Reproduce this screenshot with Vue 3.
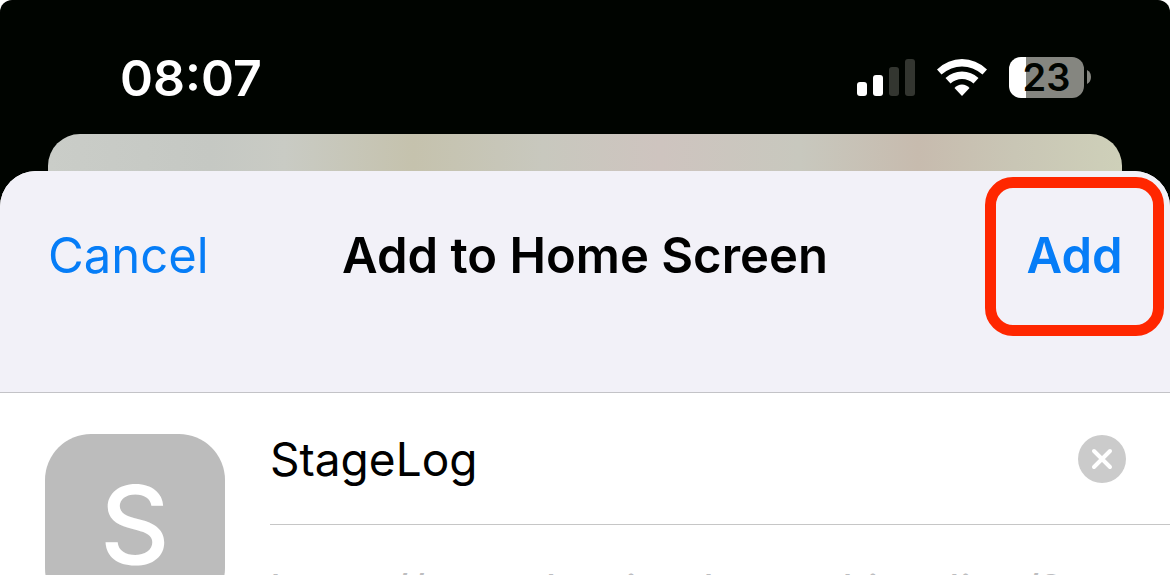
<script setup>
import { ref } from 'vue'

const name = ref('StageLog')
const bars = [14, 21, 29, 37]
</script>

<template>
  <main class="screen">
    <header class="status">
      <time class="clock">08:07</time>
      <div class="indicators">
        <svg class="signal" viewBox="0 0 58 37" role="img" aria-label="Signal strength">
          <rect v-for="(h, i) in bars" :key="h" :x="i * 16" :y="37 - h" width="10" :height="h" rx="3" :fill="i < 2 ? '#fff' : '#333630'" />
        </svg>
        <svg class="wifi" viewBox="0 0 50 37" role="img" aria-label="Wi-Fi">
          <path d="M0 10.500Q11 0 25 0T50 10.500L45.500 15.500Q36 7.500 25 7.500T4.500 15.500Z" fill="#fff" />
          <path d="M8.500 19Q15.500 12.500 25 12.500T41.500 19L36.500 24.500Q31.500 20 25 20T13.500 24.500Z" fill="#fff" />
          <path d="M17.500 29Q20.500 25.500 25 25.500T32.500 29L25 37Z" fill="#fff" />
        </svg>
        <div class="battery">
          <span class="cell">23</span>
          <svg class="cap" viewBox="0 0 4 14" aria-hidden="true"><path d="M0 0Q4 2 4 7T0 14Z" fill="#858680" /></svg>
        </div>
      </div>
    </header>

    <div class="behind"></div>

    <section class="sheet">
      <nav class="bar">
        <button class="action cancel" type="button">Cancel</button>
        <h1 class="title">Add to Home Screen</h1>
        <button class="action add" type="button">Add</button>
      </nav>
      <form class="details" @submit.prevent>
        <div class="icon">S</div>
        <div class="fields">
          <div class="row">
            <input v-model="name" class="name" type="text" aria-label="Name" />
            <button class="clear" type="button" aria-label="Clear name" @click="name = ''">
              <svg viewBox="0 0 48 48" aria-hidden="true">
                <circle cx="24" cy="24" r="24" fill="#cbcbcb" />
                <path d="M16 16L32 32M32 16L16 32" stroke="#fff" stroke-width="4" stroke-linecap="round" />
              </svg>
            </button>
          </div>
          <p class="url">https://stagelog.jamboree.kiranlive/?</p>
        </div>
      </form>
    </section>
  </main>
</template>

<style>
html {
  background: #fff;
}
body {
  margin: 0;
}
</style>

<style scoped>
.screen {
  display: flex;
  flex-direction: column;
  height: 100vh;
  overflow: hidden;
  border-radius: 12px 12px 0 0;
  background: #000400;
  font-family: Inter, "Liberation Sans", sans-serif;
}
.status {
  display: flex;
  flex: none;
  align-items: center;
  justify-content: space-between;
  height: 114px;
  padding: 20px 79px 0 120px;
}
.clock {
  padding-top: 2px;
  color: #fff;
  font-size: 50px;
  line-height: 60px;
  font-weight: 600;
}
.indicators {
  display: flex;
  align-items: center;
  gap: 22px;
}
.signal {
  width: 58px;
  height: 37px;
}
.wifi {
  width: 50px;
  height: 37px;
}
.battery {
  display: flex;
  align-items: center;
  gap: 3px;
}
.cell {
  width: 75px;
  height: 41px;
  border-radius: 12px;
  background: linear-gradient(90deg, #fff 17px, #858680 17px);
  color: #000400;
  font-size: 38px;
  line-height: 41px;
  font-weight: 600;
  text-align: center;
}
.cap {
  width: 4px;
  height: 14px;
}
.behind {
  flex: none;
  height: 37px;
  margin: 0 48px;
  border-radius: 32px 32px 0 0;
  background: linear-gradient(90deg, #cacdc8, #c5c8c3 15%, #c9cbc4 22%, #c5c2ad 34%, #c8c8be 46%, #cec4bf 57%, #c8c8be 70%, #c7bbae 81%, #c9c6b5 90%, #ced0b9);
}
.sheet {
  flex: 1;
  min-height: 0;
  border-radius: 36px 36px 0 0;
  overflow: hidden;
  background: #fff;
}
.bar {
  display: grid;
  grid-template-columns: 1fr auto 1fr;
  align-items: start;
  height: 215px;
  padding: 6px 48px 0;
  border-bottom: 1px solid #c3c3c7;
  background: #f2f1f8;
}
.action {
  border: 0;
  padding: 0;
  background: none;
  color: #067df7;
  font: inherit;
  font-size: 49px;
  line-height: 60px;
}
.cancel {
  justify-self: start;
  margin-top: 49px;
}
.title {
  margin: 49px 0 0;
  color: #000;
  font-size: 49px;
  line-height: 60px;
  font-weight: 600;
}
.add {
  justify-self: end;
  width: 179px;
  height: 159px;
  margin-right: -42px;
  padding-bottom: 2px;
  border: 11px solid #ff2700;
  border-radius: 28px;
  font-weight: 600;
}
.details {
  display: flex;
  gap: 45px;
  padding-left: 45px;
}
.icon {
  flex: none;
  width: 180px;
  height: 180px;
  margin-top: 41px;
  border-radius: 46px;
  background: #bcbcbc;
  color: #fff;
  font-size: 108px;
  line-height: 182px;
  font-weight: 500;
  text-align: center;
}
.fields {
  flex: 1;
  min-width: 0;
}
.row {
  display: flex;
  align-items: center;
  height: 131px;
  padding-right: 44px;
  border-bottom: 1px solid #c6c6c6;
}
.name {
  flex: 1;
  min-width: 0;
  height: 60px;
  padding: 0;
  border: 0;
  outline: 0;
  background: none;
  color: #000;
  font: inherit;
  font-size: 46px;
}
.clear {
  flex: none;
  width: 48px;
  height: 48px;
  padding: 0;
  border: 0;
  background: none;
}
.clear svg {
  display: block;
}
.url {
  margin: 36px 0 0;
  color: #bdbdbf;
  font-size: 46px;
  line-height: 60px;
  white-space: nowrap;
}
</style>
